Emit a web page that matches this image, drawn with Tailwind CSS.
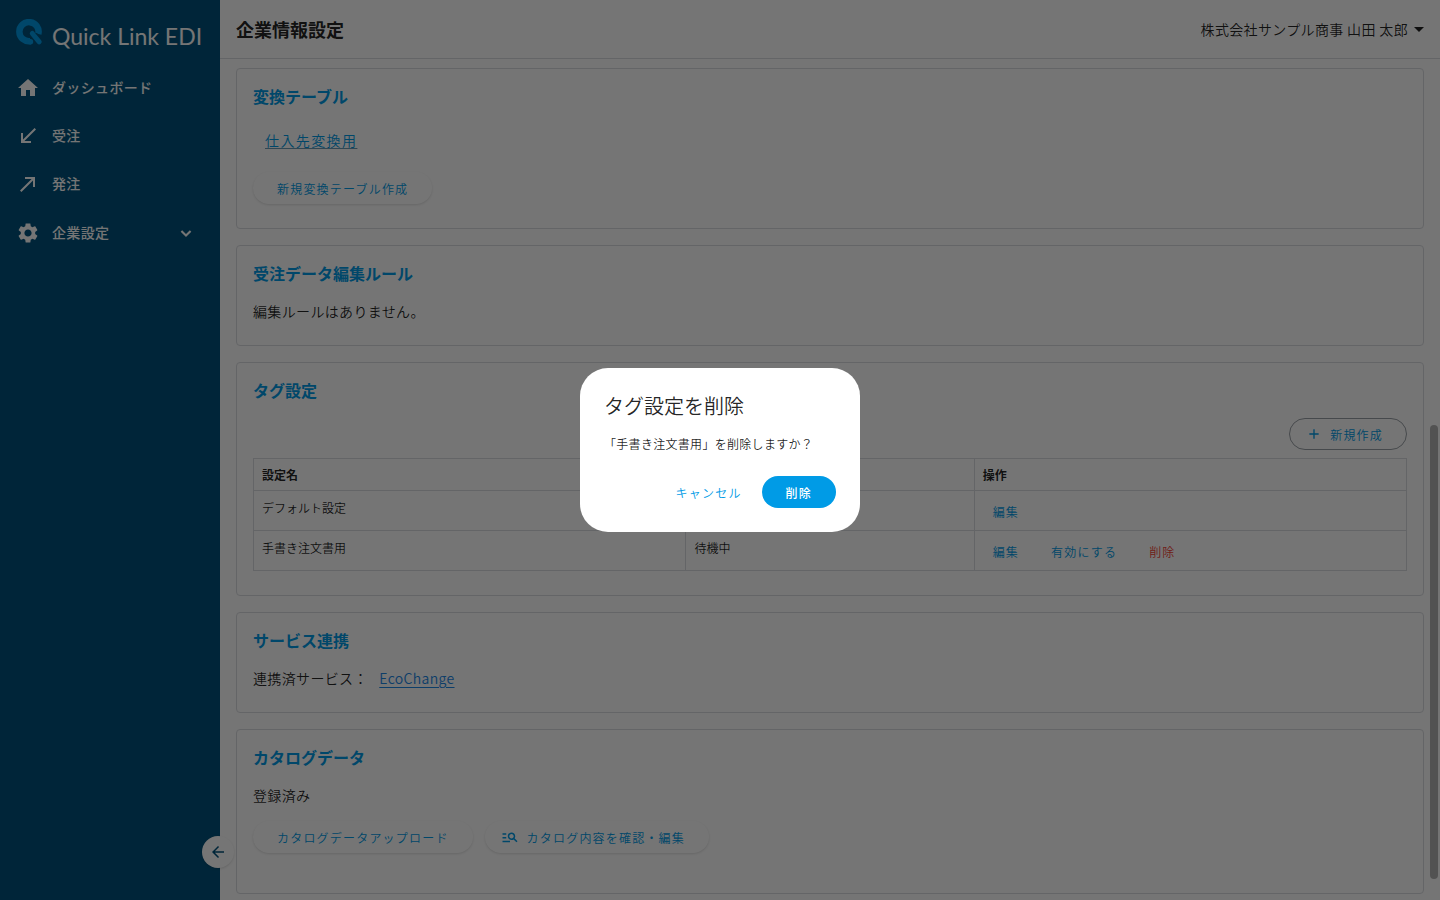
<!DOCTYPE html>
<html lang="ja">

<head>
  <meta charset="UTF-8" />
  <meta name="viewport" content="width=device-width, initial-scale=1.0" />
  <title>企業情報設定 | Quick Link EDI</title>
  <script src="https://cdn.jsdelivr.net/npm/@tailwindcss/browser@4"></script>
</head>

<body class="h-screen overflow-hidden bg-white text-black/87 text-sm font-[350] font-['Noto_Sans_CJK_JP',sans-serif]">

  <div class="flex h-full">
    <!-- Sidebar -->
    <aside class="relative w-[220px] shrink-0 bg-[#00527c] text-white">
      <a href="#" class="flex items-center gap-2 px-4 pt-2 h-14">
        <svg class="w-7 h-7 mt-0.5 shrink-0" viewBox="0 0 28 28" fill="none">
          <path stroke="#009be6" stroke-width="6.500" d="M14.500 22.200A9.600 9.600 0 1 1 22.300 15" />
          <path stroke="#00527c" stroke-width="7" stroke-linecap="round" d="M19.500 17.500L23 22" />
          <path stroke="#009be6" stroke-width="5" stroke-linecap="round" d="M16.300 14.500L23.200 22.800" />
          <circle cx="14.500" cy="22.700" r="2.700" fill="#009be6" />
        </svg>
        <span class="text-[23px] leading-8 pt-2 whitespace-nowrap font-normal font-['Lato',sans-serif]">Quick Link EDI</span>
      </a>
      <nav class="pt-2 font-medium tracking-wide">
        <a href="#" class="flex items-center gap-3 h-12 px-4">
          <svg class="w-6 h-6" viewBox="0 0 24 24" fill="currentColor"><path d="M10 20v-6h4v6h5v-8h3L12 3 2 12h3v8z" /></svg>
          <span class="pb-0.5">ダッシュボード</span>
        </a>
        <a href="#" class="flex items-center gap-3 h-12 px-4">
          <svg class="w-6 h-6" viewBox="0 0 24 24" fill="currentColor"><path d="M20 5.410L18.590 4 7 15.590V9H5v10h10v-2H8.410z" /></svg>
          <span class="pb-0.5">受注</span>
        </a>
        <a href="#" class="flex items-center gap-3 h-12 px-4">
          <svg class="w-6 h-6" viewBox="0 0 24 24" fill="currentColor"><path d="M9 5v2h6.590L4 18.590 5.410 20 17 8.410V15h2V5z" /></svg>
          <span class="pb-0.5">発注</span>
        </a>
        <a href="#" class="flex items-center gap-3 h-[50px] px-4">
          <svg class="w-6 h-6" viewBox="0 0 24 24" fill="currentColor"><path d="M19.140 12.940c.04-.3.060-.61.060-.94 0-.32-.02-.64-.07-.94l2.030-1.580c.18-.14.230-.41.120-.61l-1.920-3.320c-.12-.22-.37-.29-.59-.22l-2.390.96c-.5-.38-1.030-.7-1.620-.94l-.36-2.540c-.04-.24-.24-.41-.48-.41h-3.840c-.24 0-.43.17-.47.41l-.36 2.540c-.59.240-1.130.570-1.620.940l-2.390-.96c-.22-.08-.47 0-.59.22L2.740 8.870c-.12.210-.08.470.120.610l2.030 1.580c-.05.3-.09.630-.09.940s.02.640.070.940l-2.030 1.580c-.18.140-.23.410-.12.610l1.920 3.320c.12.220.370.290.590.220l2.390-.96c.5.380 1.030.7 1.620.940l.36 2.540c.05.240.240.410.480.410h3.840c.24 0 .44-.17.470-.41l.36-2.540c.59-.24 1.130-.56 1.620-.94l2.390.96c.22.080.470 0 .59-.22l1.920-3.320c.12-.22.070-.47-.12-.61l-2.010-1.580zM12 15.600c-1.980 0-3.600-1.620-3.600-3.600s1.620-3.600 3.600-3.600 3.600 1.620 3.600 3.600-1.620 3.600-3.600 3.600z" /></svg>
          <span class="grow pb-0.5">企業設定</span>
          <svg class="w-5 h-5 mr-2" viewBox="0 0 24 24" fill="none" stroke="currentColor" stroke-width="2.500"><path d="M6.500 9.500l5.500 5.500 5.500-5.500" /></svg>
        </a>
      </nav>
      <button aria-label="メニューを閉じる" class="absolute bottom-8 -right-3.5 flex items-center justify-center w-8 h-8 rounded-full bg-white text-[#00527c] shadow">
        <svg class="w-[18px] h-[18px]" viewBox="0 0 24 24" fill="currentColor"><path d="M20 11H7.830l5.590-5.590L12 4l-8 8 8 8 1.410-1.410L7.830 13H20v-2z" /></svg>
      </button>
    </aside>

    <div class="flex flex-col grow min-w-0">
      <header class="flex items-center justify-between h-[59px] shrink-0 px-4 border-b border-[#dadce0]">
        <h1 class="text-lg font-bold">企業情報設定</h1>
        <button class="flex items-center gap-1.5 tracking-wide">株式会社サンプル商事 山田 太郎
          <svg class="w-2.5 h-[5px]" viewBox="0 0 10 5" fill="currentColor"><path d="M0 0h10L5 5z" /></svg>
        </button>
      </header>

      <main class="relative flex flex-col gap-4 grow min-h-0 overflow-hidden pt-[9px] px-4">
        <section class="shrink-0 h-[161px] border border-[#dadce0] rounded px-4 pt-[15px]">
          <h2 class="text-base font-bold text-[#009be6]">変換テーブル</h2>
          <a href="#" class="inline-block mt-[22px] ml-3 tracking-widest underline underline-offset-2 decoration-[#6b9cb5] text-[#009be6]">仕入先変換用</a>
          <div class="mt-[22px]">
            <button class="h-8 px-6 pt-0.5 rounded-full text-xs tracking-widest text-[#009be6] shadow">新規変換テーブル作成</button>
          </div>
        </section>

        <section class="shrink-0 h-[101px] border border-[#dadce0] rounded px-4 pt-[15px]">
          <h2 class="text-base font-bold text-[#009be6]">受注データ編集ルール</h2>
          <p class="mt-4 tracking-wide">編集ルールはありません。</p>
        </section>

        <section class="shrink-0 h-[234px] border border-[#dadce0] rounded px-4 pt-[15px]">
          <h2 class="text-base font-bold text-[#009be6]">タグ設定</h2>
          <div class="flex justify-end mt-4 mb-2">
            <button class="flex items-center gap-2 h-8 pl-4 pr-[23px] border border-[#9aa0a6] rounded-full text-xs tracking-widest text-[#009be6]">
              <svg class="w-4 h-4" viewBox="0 0 24 24" fill="currentColor"><path d="M19 13h-6v6h-2v-6H5v-2h6V5h2v6h6v2z" /></svg>
              <span class="pt-0.5">新規作成</span>
            </button>
          </div>
          <table class="w-full table-fixed border-collapse border border-[#dadce0] text-xs">
            <thead>
              <tr class="h-8 text-left">
                <th class="w-[37.5%] px-2 border border-[#dadce0]">設定名</th>
                <th class="w-[25%] px-2 border border-[#dadce0]">状態</th>
                <th class="w-[37.5%] px-2 border border-[#dadce0]">操作</th>
              </tr>
            </thead>
            <tbody>
              <tr class="h-10">
                <td class="px-2 pt-[9px] align-top border border-[#dadce0]">デフォルト設定</td>
                <td class="px-2 pt-[9px] align-top border border-[#dadce0]">有効</td>
                <td class="px-2 pt-0.5 border border-[#dadce0]">
                  <button class="px-2.5 tracking-widest text-[#009be6]">編集</button>
                </td>
              </tr>
              <tr class="h-10">
                <td class="px-2 pt-[9px] align-top border border-[#dadce0]">手書き注文書用</td>
                <td class="px-2 pt-[9px] align-top border border-[#dadce0]">待機中</td>
                <td class="px-2 pt-0.5 border border-[#dadce0]">
                  <div class="flex gap-3">
                    <button class="px-2.5 tracking-widest text-[#009be6]">編集</button>
                    <button class="px-2.5 tracking-widest text-[#009be6]">有効にする</button>
                    <button class="px-2.5 tracking-widest text-[#f44336]">削除</button>
                  </div>
                </td>
              </tr>
            </tbody>
          </table>
        </section>

        <section class="shrink-0 h-[101px] border border-[#dadce0] rounded px-4 pt-[15px]">
          <h2 class="text-base font-bold text-[#009be6]">サービス連携</h2>
          <p class="mt-4 tracking-wide">連携済サービス： <a href="#" class="ml-2 underline underline-offset-3 text-[#1e88e5]">EcoChange</a></p>
        </section>

        <section class="shrink-0 h-[165px] border border-[#dadce0] rounded px-4 pt-[15px]">
          <h2 class="text-base font-bold text-[#009be6]">カタログデータ</h2>
          <p class="mt-4 tracking-wide">登録済み</p>
          <div class="flex gap-3 mt-4">
            <button class="h-8 px-6 pt-0.5 rounded-full text-xs tracking-widest text-[#009be6] shadow">カタログデータアップロード</button>
            <button class="flex items-center gap-2 h-8 pl-4 pr-6 rounded-full text-xs tracking-widest text-[#009be6] shadow">
              <svg class="w-[18px] h-[18px]" viewBox="0 0 24 24" fill="currentColor"><path d="M7 9H2V7h5v2zm0 3H2v2h5v-2zm13.590 7l-3.830-3.830c-.8.520-1.740.830-2.760.830-2.760 0-5-2.240-5-5s2.240-5 5-5 5 2.240 5 5c0 1.020-.31 1.960-.83 2.750L22 17.590 20.590 19zM17 11c0-1.650-1.350-3-3-3s-3 1.350-3 3 1.350 3 3 3 3-1.350 3-3zM2 19h10v-2H2v2z" /></svg>
              <span class="pt-0.5">カタログ内容を確認・編集</span>
            </button>
          </div>
        </section>

        <!-- Scrollbar thumb -->
        <div class="absolute right-0.5 bottom-[21px] w-2 h-[54%] rounded-full bg-[#b4b4b4]"></div>
      </main>
    </div>
  </div>

  <!-- Modal -->
  <div class="fixed inset-0 flex items-center justify-center bg-black/54 z-50">
    <div role="dialog" aria-modal="true" aria-labelledby="dialogTitle" class="w-[280px] px-6 pt-[22px] pb-6 rounded-[28px] bg-white text-black/87">
      <h2 id="dialogTitle" class="text-xl leading-8">タグ設定を削除</h2>
      <p class="mt-3 text-xs leading-5 tracking-wide">「手書き注文書用」を削除しますか？</p>
      <div class="flex justify-end gap-2 mt-[22px] text-xs tracking-widest">
        <button class="h-8 px-3 pt-0.5 text-[#009be6]">キャンセル</button>
        <button class="h-8 px-6 pt-0.5 rounded-full bg-[#009be6] font-medium text-white">削除</button>
      </div>
    </div>
  </div>

</body>

</html>
